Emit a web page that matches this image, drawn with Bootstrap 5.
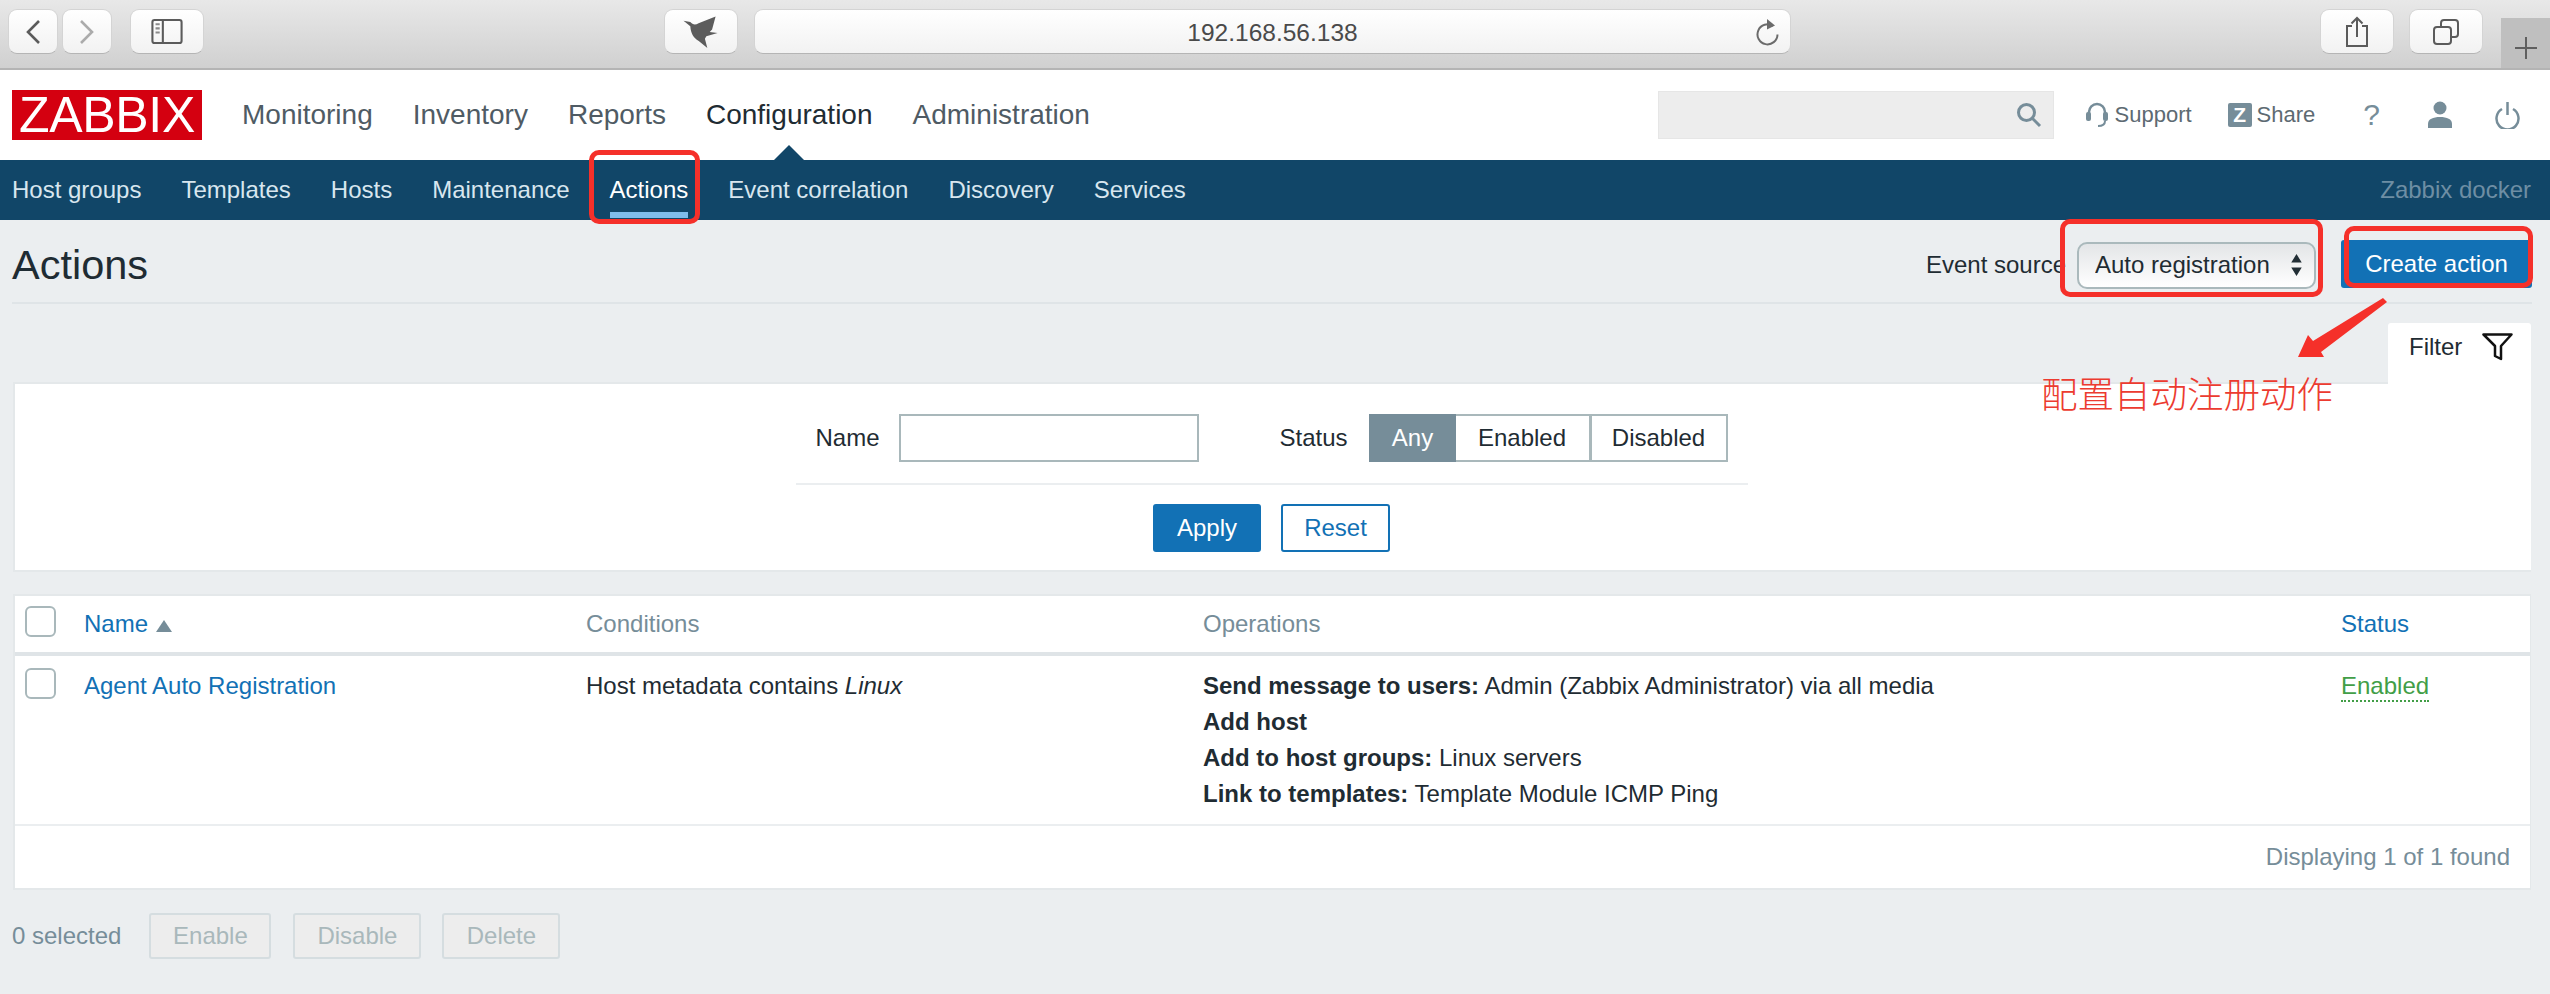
<!DOCTYPE html>
<html lang="en">
<head>
    <meta charset="UTF-8">
    <meta name="viewport" content="width=device-width, initial-scale=1.0">
    <title>Actions - Zabbix</title>
    <link href="https://cdn.jsdelivr.net/npm/bootstrap@5.3.3/dist/css/bootstrap.min.css" rel="stylesheet">
    <style>
        html, body { height: 994px; overflow: hidden; }
        body {
            position: relative;
            background: #ebeef0;
            color: #1f2c33;
            font-family: "Liberation Sans", Arial, sans-serif;
            font-size: 24px;
            line-height: 36px;
        }
        /* browser toolbar */
        .safari-bar {
            height: 70px;
            padding: 9px 0 0 8px;
            background: linear-gradient(#e8e8e8, #d0d0d0);
            border-bottom: 2px solid #b4b4b4;
            position: relative;
        }
        .safari-btn {
            height: 45px;
            background: linear-gradient(#fff, #f2f2f2);
            border: 1px solid #d4d4d4;
            border-bottom-color: #b5b5b5;
            border-radius: 9px;
            display: flex;
            align-items: center;
            justify-content: center;
            flex: none;
        }
        .w-nav { width: 50px; }
        .w-tool { width: 74px; }
        .url-box {
            width: 1037px;
            padding: 2px 0 0;
            color: #4a4a4a;
            font-size: 24.5px;
            position: relative;
        }
        .url-box svg { position: absolute; right: 10px; top: 7px; }
        .new-tab {
            position: absolute;
            right: 0;
            top: 18px;
            width: 49px;
            height: 50px;
            background: #bfbfbf;
            display: flex;
            align-items: center;
            justify-content: center;
            padding-top: 10px;
        }
        /* zabbix header */
        .top-head {
            height: 90px;
            background: #fff;
            padding: 0 30px 0 12px;
        }
        .zbx-logo {
            width: 190px;
            height: 50px;
            background: #d40010;
            color: #fff;
            font-size: 50px;
            line-height: 51px;
            text-align: center;
            letter-spacing: -.3px;
            flex: none;
        }
        .main-menu { margin-left: 40px; gap: 40px; font-size: 28px; }
        .main-menu a { color: #4f5b64; text-decoration: none; position: relative; }
        .main-menu a.picked { color: #1f2c33; }
        .main-menu a.picked::after {
            content: "";
            position: absolute;
            left: 50%;
            margin-left: -16px;
            top: 48px;
            border: 16px solid transparent;
            border-top: 0;
            border-bottom-color: #114668;
        }
        .search-box {
            width: 396px;
            height: 48px;
            background: #ededed;
            border: 1px solid #e6e6e6;
            padding-right: 11px;
        }
        .util-links { color: #5d6a72; font-size: 22px; }
        .z-icon {
            width: 24px;
            height: 24px;
            background: #768d99;
            color: #fff;
            font-weight: 700;
            font-size: 21px;
            line-height: 24px;
            text-align: center;
            border-radius: 2px;
        }
        .help-mark { color: #768d99; font-size: 30px; }
        /* sub menu */
        .sub-menu {
            height: 60px;
            background: #114668;
            padding: 0 19px 0 12px;
            gap: 40px;
        }
        .sub-menu a { color: #d8e6ef; text-decoration: none; line-height: 60px; position: relative; display: block; }
        .sub-menu a.picked { color: #fff; }
        .sub-menu a.picked::after {
            content: "";
            position: absolute;
            left: 0;
            right: 0;
            bottom: 2px;
            height: 6px;
            background: #7fbcea;
        }
        .server-name { color: #6e8ea4; margin-left: auto; }
        /* page */
        .page-body { padding: 0 18px 0 12px; }
        .title-row { height: 84px; padding-top: 8px; border-bottom: 2px solid #dfe4e7; }
        .title-row h1 { font-size: 41.5px; font-weight: 400; margin: 0; }
        .source-select {
            width: 239px;
            height: 47px;
            margin-left: 11px;
            padding: 0 30px 0 16px;
            font-size: 24px;
            color: #1f2c33;
            border: 2px solid #aab9bc;
            border-radius: 10px;
            background-color: #fff;
            background-image:
                url("data:image/svg+xml,%3Csvg xmlns='http://www.w3.org/2000/svg' viewBox='0 0 10 21'%3E%3Cpath fill='%23222e35' d='M5 0l5 8H0zM5 21L0 13h10z'/%3E%3C/svg%3E"),
                linear-gradient(#e3e5e7, #fff);
            background-repeat: no-repeat;
            background-position: right 12px center, 0 0;
            background-size: 11px 22px, auto;
        }
        .blue-btn {
            height: 48px;
            padding: 0;
            font-size: 24px;
            background: #1271b5;
            border: 0;
            border-radius: 3px;
            color: #fff;
        }
        .create-btn { width: 191px; margin: 0 0 2px 25px; }
        .filter-tab-row { margin-top: 19px; height: 59px; padding-right: 1px; position: relative; z-index: 1; }
        .filter-tab {
            width: 143px;
            height: 62px;
            background: #fff;
            padding: 6px 18px 0 21px;
            border-radius: 3px 3px 0 0;
        }
        .filter-box {
            height: 190px;
            margin-left: 1px;
            margin-right: 1px;
            background: #fff;
            border: 0;
            border-top: 2px solid #e4e8ea;
            border-left: 2px solid #e4e8ea;
            border-bottom: 2px solid #e4e8ea;
            border-radius: 0;
            padding: 30px 3px 0 0;
        }
        .name-input {
            width: 300px;
            height: 48px;
            margin-left: 20px;
            margin-right: 80px;
            border: 2px solid #a9b8bb;
            border-radius: 0;
        }
        .status-label { margin-right: 21px; }
        .status-group .btn {
            height: 48px;
            padding: 0;
            font-size: 24px;
            color: #1f2c33;
            background: #fff;
            border: 2px solid #a9b8bb;
            border-radius: 0;
        }
        .status-group .btn.w-any { width: 88px; background: #768d99; border-color: #768d99; color: #fff; }
        .status-group .btn.w-on { width: 135px; margin-left: 0; border-left: 0; }
        .status-group .btn.w-off { width: 138px; margin-left: 0; border-left: 2px solid #a9b8bb; }
        .filter-line { width: 952px; height: 2px; background: #ebeef0; margin: 21px auto 19px; }
        .apply-btn { width: 108px; }
        .reset-btn {
            width: 109px;
            height: 48px;
            padding: 0;
            font-size: 24px;
            color: #1271b5;
            background: #fff;
            border: 2px solid #1271b5;
            border-radius: 3px;
        }
        .list-box {
            margin: 22px 1px 0;
            background: #fff;
            border: 2px solid #e4e8ea;
            border-right-width: 1px;
            border-radius: 0;
        }
        .list-table { table-layout: fixed; margin: 0; font-size: 24px; --bs-table-bg: transparent; color: #1f2c33; }
        .list-table th, .list-table td { border: 0; padding: 12px 12px; line-height: 36px; }
        .list-table th { padding: 10px 12px; font-weight: 400; color: #768d99; border-bottom: 4px solid #dfe4e7; vertical-align: top; }
        .list-table td { border-bottom: 2px solid #ebeef0; height: 170px; vertical-align: top; }
        .list-table a { color: #1271b5; text-decoration: none; }
        .col-check { width: 57px; }
        .col-name { width: 502px; }
        .col-cond { width: 617px; }
        .col-oper { width: 1138px; }
        .sort-mark {
            display: inline-block;
            border: 8px solid transparent;
            border-top: 0;
            border-bottom: 12px solid #768d99;
            margin-left: 1px;
        }
        .row-check {
            width: 31px;
            height: 31px;
            margin: 0 0 0 -2px;
            border: 2px solid #a9b8bb;
            border-radius: 4px;
            display: block;
        }
        .list-table th .row-check { margin-top: 0; }
        .list-table a.enabled-link { color: #429e47; border-bottom: 2px dotted #429e47; padding-bottom: 1px; }
        .list-foot { height: 62px; padding-right: 20px; color: #768d99; }
        .bottom-row { margin-top: 23px; color: #768d99; }
        .off-btn {
            height: 46px;
            padding: 0;
            font-size: 24px;
            color: #a9b8bb;
            background: #ededed;
            border: 2px solid #d5dde0;
            border-radius: 3px;
        }
        .off-btn:disabled { color: #a9b8bb; background: #ededed; border-color: #d5dde0; opacity: 1; }
        .w-enable { width: 122px; margin-left: 28px; }
        .w-disable { width: 128px; margin-left: 22px; }
        .w-delete { width: 118px; margin-left: 21px; }
        /* red annotations drawn over the page */
        .red-mark { position: absolute; border: 5px solid #f5302a; border-radius: 10px; pointer-events: none; z-index: 2; }
        .mark-actions { left: 589px; top: 150px; width: 111px; height: 74px; }
        .mark-select { left: 2060px; top: 219px; width: 263px; height: 78px; }
        .mark-create { left: 2344px; top: 226px; width: 189px; height: 62px; }
        .red-arrow { position: absolute; left: 2290px; top: 290px; z-index: 2; }
        .red-note {
            position: absolute;
            left: 2041px;
            top: 370px;
            z-index: 2;
            color: #ec3b30;
            font-size: 36.5px;
            line-height: 46px;
            font-family: "Noto Sans CJK SC", sans-serif;
            font-weight: 300;
            white-space: nowrap;
        }
    </style>
</head>
<body>
    <!-- browser toolbar -->
    <div class="safari-bar d-flex">
        <div class="safari-btn w-nav">
            <svg width="16" height="26" viewBox="0 0 16 26"><path d="M14 2L3 13l11 11" fill="none" stroke="#5b5b5b" stroke-width="2.6"/></svg>
        </div>
        <div class="safari-btn w-nav ms-1">
            <svg width="16" height="26" viewBox="0 0 16 26"><path d="M2 2l11 11L2 24" fill="none" stroke="#ababab" stroke-width="2.6"/></svg>
        </div>
        <div class="safari-btn w-tool" style="margin-left:18px">
            <svg width="32" height="25" viewBox="0 0 30 24"><rect x="1" y="1" width="28" height="22" rx="2" fill="none" stroke="#5b5b5b" stroke-width="2"/><path d="M11 1v22" stroke="#5b5b5b" stroke-width="2"/><path d="M4 5h4M4 9h4M4 13h4" stroke="#8a8a8a" stroke-width="2"/></svg>
        </div>
        <div class="safari-btn w-tool" style="margin-left:460px">
            <svg width="74" height="45" viewBox="0 0 74 45"><path d="M19 11.500l7 1.200c2.500 2.800 5 3.300 8.500 1.300L52 7l-3.600 13.500-2.400 2.500 8 1-11.500 3.500-1.500 2.500 2.500 9.500-8.800-7.300C29 29 26.500 24 26 17z" fill="#5c5c5c"/></svg>
        </div>
        <div class="safari-btn url-box" style="margin-left:16px">
            192.168.56.138
            <svg width="24" height="32" viewBox="0 0 24 32"><path d="M17 9a10 10 0 1 0 4.500 8.500" fill="none" stroke="#6b6b6b" stroke-width="2"/><path d="M11 2l8 6.500-8 4z" fill="#6b6b6b"/></svg>
        </div>
        <div class="safari-btn w-tool" style="margin-left:529px">
            <svg width="24" height="32" viewBox="0 0 24 32"><path d="M7 10H2v20h20V10h-5" fill="none" stroke="#5b5b5b" stroke-width="2"/><path d="M12 21V2M6.500 7.500L12 2l5.500 5.500" fill="none" stroke="#5b5b5b" stroke-width="2"/></svg>
        </div>
        <div class="safari-btn w-tool" style="margin-left:15px">
            <svg width="26" height="26" viewBox="0 0 26 26"><rect x="1" y="8" width="17" height="17" rx="3" fill="none" stroke="#5b5b5b" stroke-width="2"/><path d="M8 8V4a3 3 0 0 1 3-3h11a3 3 0 0 1 3 3v11a3 3 0 0 1-3 3h-4" fill="none" stroke="#5b5b5b" stroke-width="2"/></svg>
        </div>
        <div class="new-tab">
            <svg width="22" height="22" viewBox="0 0 22 22"><path d="M11 0v22M0 11h22" stroke="#5f5f5f" stroke-width="2"/></svg>
        </div>
    </div>

    <!-- zabbix header -->
    <header class="top-head d-flex align-items-center">
        <div class="zbx-logo">ZABBIX</div>
        <nav class="main-menu d-flex">
            <a href="#">Monitoring</a>
            <a href="#">Inventory</a>
            <a href="#">Reports</a>
            <a href="#" class="picked">Configuration</a>
            <a href="#">Administration</a>
        </nav>
        <div class="search-box d-flex align-items-center justify-content-end ms-auto">
            <svg width="26" height="26" viewBox="0 0 26 26"><circle cx="10.500" cy="10.500" r="8" fill="none" stroke="#768d99" stroke-width="3"/><path d="M16 16l8 8" stroke="#768d99" stroke-width="3"/></svg>
        </div>
        <div class="util-links d-flex align-items-center">
            <svg style="margin-left:32px" width="22" height="28" viewBox="0 0 22 28"><path d="M3 16V11a8 8 0 0 1 16 0v5" fill="none" stroke="#768d99" stroke-width="2.500"/><rect x="0" y="11" width="5" height="9" rx="2" fill="#768d99"/><rect x="17" y="11" width="5" height="9" rx="2" fill="#768d99"/><path d="M19 20c0 4-3 5-7 5" fill="none" stroke="#768d99" stroke-width="2"/></svg>
            <span style="margin-left:7px">Support</span>
            <span class="z-icon" style="margin-left:36px">Z</span>
            <span style="margin-left:5px">Share</span>
            <span class="help-mark" style="margin-left:48px">?</span>
            <svg style="margin-left:48px" width="24" height="28" viewBox="0 0 24 28"><circle cx="12" cy="7" r="6.500" fill="#768d99"/><path d="M0 27v-4c0-5 5-7 12-7s12 2 12 7v4z" fill="#768d99"/></svg>
            <svg style="margin-left:43px" width="25" height="28" viewBox="0 0 25 28"><path d="M7 8a11 11 0 1 0 11 0" fill="none" stroke="#768d99" stroke-width="2.500"/><path d="M12.500 1v13" stroke="#768d99" stroke-width="2.500"/></svg>
        </div>
    </header>

    <nav class="sub-menu d-flex">
        <a href="#">Host groups</a>
        <a href="#">Templates</a>
        <a href="#">Hosts</a>
        <a href="#">Maintenance</a>
        <a href="#" class="picked">Actions</a>
        <a href="#">Event correlation</a>
        <a href="#">Discovery</a>
        <a href="#">Services</a>
        <span class="server-name align-self-center">Zabbix docker</span>
    </nav>

    <main class="page-body">
        <div class="title-row d-flex align-items-center">
            <h1>Actions</h1>
            <span class="ms-auto">Event source</span>
            <select class="form-select source-select" aria-label="Event source">
                <option>Auto registration</option>
            </select>
            <button class="btn blue-btn create-btn" type="button">Create action</button>
        </div>

        <div class="filter-tab-row d-flex justify-content-end">
            <div class="filter-tab d-flex justify-content-between">
                <span>Filter</span>
                <svg class="mt-1" width="31" height="28" viewBox="0 0 31 28"><path d="M1.500 1.500h28L19 13v13l-6-3V13z" fill="none" stroke="#111" stroke-width="2.500" stroke-linejoin="round"/></svg>
            </div>
        </div>

        <section class="card filter-box">
            <div class="d-flex align-items-center justify-content-center">
                <label>Name</label>
                <input class="form-control name-input" type="text" aria-label="Name">
                <span class="status-label">Status</span>
                <div class="btn-group status-group">
                    <button class="btn w-any" type="button">Any</button>
                    <button class="btn w-on" type="button">Enabled</button>
                    <button class="btn w-off" type="button">Disabled</button>
                </div>
            </div>
            <div class="filter-line"></div>
            <div class="d-flex justify-content-center" style="gap:20px">
                <button class="btn blue-btn apply-btn" type="button">Apply</button>
                <button class="btn reset-btn" type="button">Reset</button>
            </div>
        </section>

        <section class="card list-box">
            <table class="table list-table">
                <colgroup>
                    <col class="col-check"><col class="col-name"><col class="col-cond"><col class="col-oper"><col>
                </colgroup>
                <thead>
                    <tr>
                        <th><input class="form-check-input row-check" type="checkbox" aria-label="Select all"></th>
                        <th><a href="#">Name</a> <span class="sort-mark"></span></th>
                        <th>Conditions</th>
                        <th>Operations</th>
                        <th><a href="#">Status</a></th>
                    </tr>
                </thead>
                <tbody>
                    <tr>
                        <td><input class="form-check-input row-check" type="checkbox" aria-label="Select row"></td>
                        <td><a href="#">Agent Auto Registration</a></td>
                        <td>Host metadata contains <em>Linux</em></td>
                        <td>
                            <b>Send message to users:</b> Admin (Zabbix Administrator) via all media<br>
                            <b>Add host</b><br>
                            <b>Add to host groups:</b> Linux servers<br>
                            <b>Link to templates:</b> Template Module ICMP Ping
                        </td>
                        <td><a href="#" class="enabled-link">Enabled</a></td>
                    </tr>
                </tbody>
            </table>
            <div class="list-foot d-flex align-items-center justify-content-end">Displaying 1 of 1 found</div>
        </section>

        <div class="bottom-row d-flex align-items-center">
            <span>0 selected</span>
            <button class="btn off-btn w-enable" type="button" disabled>Enable</button>
            <button class="btn off-btn w-disable" type="button" disabled>Disable</button>
            <button class="btn off-btn w-delete" type="button" disabled>Delete</button>
        </div>
    </main>

    <!-- red annotations -->
    <div class="red-mark mark-actions"></div>
    <div class="red-mark mark-select"></div>
    <div class="red-mark mark-create"></div>
    <svg class="red-arrow" width="100" height="72" viewBox="0 0 100 72"><path d="M93 8l4 4-66 50 3 5-26 0 10-22 5 6z" fill="#f5302a"/></svg>
    <div class="red-note">配置自动注册动作</div>

    <script src="https://cdn.jsdelivr.net/npm/bootstrap@5.3.3/dist/js/bootstrap.bundle.min.js"></script>
</body>
</html>
